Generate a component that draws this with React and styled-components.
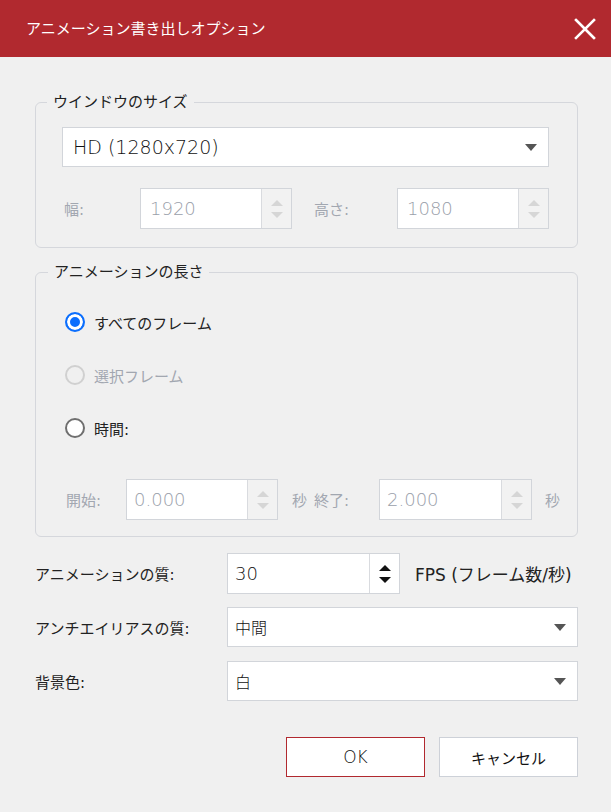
import React from 'react'
import styled, { createGlobalStyle } from 'styled-components'

const GlobalStyle = createGlobalStyle`
  html, body {
    margin: 0;
    background: #f0f0f0;
  }
  body {
    font-family: "DejaVu Sans", "Noto Sans CJK JP", sans-serif;
    color: #222;
  }
`

const Dialog = styled.div`
  width: 611px;
  height: 812px;
  background: #f0f0f0;
  display: flex;
  flex-direction: column;
`

const TitleBar = styled.div`
  height: 57px;
  flex: none;
  background: #b1292f;
  display: flex;
  align-items: center;
  justify-content: space-between;
  padding: 0 14px 0 26px;
  box-sizing: border-box;
`

const Title = styled.div`
  color: #fff;
  font-size: 15px;
  line-height: 20px;
`

const CloseButton = styled.div`
  width: 24px;
  height: 24px;
  display: flex;
  align-items: center;
  justify-content: center;
`

const Body = styled.div`
  padding: 35px 33px 0 35px;
  display: flex;
  flex-direction: column;
`

const Group = styled.fieldset`
  margin: 0 0 ${p => p.$gap || 0}px;
  border: 1px solid #d5d7dc;
  border-radius: 6px;
  padding: ${p => p.$pad};
  min-inline-size: 0;
  display: flex;
  flex-direction: column;
`

const Legend = styled.legend`
  padding: 0 6px;
  margin-left: ${p => p.$indent}px;
  font-size: 15px;
  line-height: 20px;
  color: #222;
`

const SelectBox = styled.div`
  height: 40px;
  flex: 1 1 auto;
  box-sizing: border-box;
  background: #fff;
  border: 1px solid #d2d5da;
  display: flex;
  align-items: center;
  justify-content: space-between;
  padding: 0 11px 0 ${p => p.$padLeft || 7}px;
  font-size: ${p => p.$size || 16}px;
  font-weight: 300;
  color: #111;
`

const Caret = styled.span`
  width: 0;
  height: 0;
  border-left: 6px solid transparent;
  border-right: 6px solid transparent;
  border-top: 7px solid #555;
`

const FieldRow = styled.div`
  display: flex;
  align-items: center;
  margin-top: ${p => p.$top || 0}px;
`

const FieldLabel = styled.span`
  width: ${p => p.$width}px;
  flex: none;
  margin-left: ${p => p.$left || 0}px;
  padding-left: 2px;
  box-sizing: border-box;
  font-size: 15px;
  color: ${p => (p.$disabled ? '#a2a7b0' : '#222')};
`

const SpinBox = styled.div`
  width: ${p => p.$width}px;
  height: 41px;
  box-sizing: border-box;
  border: 1px solid #d2d5da;
  display: flex;
  flex: none;
  background: #fff;
`

const SpinValue = styled.div`
  flex: 1;
  display: flex;
  align-items: center;
  padding-left: ${p => p.$padLeft || 7}px;
  font-size: 18px;
  font-weight: 300;
  color: ${p => (p.$disabled ? '#9aa0aa' : '#111')};
`

const Stepper = styled.div`
  width: 30px;
  border-left: 1px solid #d9dbdf;
  background: ${p => (p.$disabled ? '#f2f2f2' : '#fff')};
  display: flex;
  flex-direction: column;
  align-items: center;
  justify-content: space-between;
  padding: 11px 0 10px;
  box-sizing: border-box;
`

const Arrow = styled.span`
  width: 0;
  height: 0;
  border-left: 6px solid transparent;
  border-right: 6px solid transparent;
  ${p => (p.$up ? 'border-bottom' : 'border-top')}: 6px solid ${p => (p.$disabled ? '#d6d6d6' : '#111')};
`

const Unit = styled.span`
  margin-left: ${p => p.$left}px;
  font-size: ${p => p.$size || 15}px;
  color: ${p => (p.$disabled ? '#a2a7b0' : '#222')};
  white-space: nowrap;
`

const RadioList = styled.div`
  display: flex;
  flex-direction: column;
  gap: 33px;
`

const RadioRow = styled.label`
  display: flex;
  align-items: center;
  height: 20px;
  margin-left: 1px;
  font-size: 15px;
  color: ${p => (p.$disabled ? '#a2a7b0' : '#222')};
`

const RadioDot = styled.span`
  width: 20px;
  height: 20px;
  box-sizing: border-box;
  border-radius: 50%;
  margin-right: 9px;
  border: 2px solid ${p => (p.$checked ? '#0b6efd' : p.$disabled ? '#d0d0d0' : '#6f6f6f')};
  background: ${p => (p.$checked ? '#0b6efd' : p.$disabled ? 'transparent' : '#fff')};
  box-shadow: ${p => (p.$checked ? 'inset 0 0 0 3px #fff' : 'none')};
`

const OptionRows = styled.div`
  display: flex;
  flex-direction: column;
  gap: 14px;
  margin-top: 16px;
`

const OptionRow = styled.div`
  display: flex;
  align-items: center;
  height: 40px;
`

const OptionLabel = styled.span`
  width: 192px;
  flex: none;
  font-size: 15px;
  color: #222;
`

const Buttons = styled.div`
  display: flex;
  justify-content: flex-end;
  gap: 14px;
  margin-top: 36px;
`

const Button = styled.div`
  width: 139px;
  height: 40px;
  box-sizing: border-box;
  background: #fff;
  border: 1px solid ${p => (p.$primary ? '#b1292f' : '#cdd1d8')};
  display: flex;
  align-items: center;
  justify-content: center;
  font-size: ${p => (p.$primary ? 17 : 15)}px;
  font-weight: ${p => (p.$primary ? 300 : 400)};
  color: #111;
`

const Spin = ({ width, value, disabled, padLeft }) => (
  <SpinBox $width={width}>
    <SpinValue $disabled={disabled} $padLeft={padLeft}>{value}</SpinValue>
    <Stepper $disabled={disabled}>
      <Arrow $up $disabled={disabled} />
      <Arrow $disabled={disabled} />
    </Stepper>
  </SpinBox>
)

const Radio = ({ label, checked, disabled }) => (
  <RadioRow $disabled={disabled}>
    <RadioDot $checked={checked} $disabled={disabled} />
    {label}
  </RadioRow>
)

const App = () => {
  return (
    <Dialog>
      <GlobalStyle />
      <TitleBar>
        <Title>アニメーション書き出しオプション</Title>
        <CloseButton>
          <svg width="22" height="22" viewBox="0 0 22 22">
            <path d="M2 2 L20 20 M20 2 L2 20" stroke="#fff" strokeWidth="2.6" strokeLinecap="square" />
          </svg>
        </CloseButton>
      </TitleBar>
      <Body>
        <Group $pad="15px 28px 18px 26px" $gap={14}>
          <Legend $indent={-15}>ウインドウのサイズ</Legend>
          <SelectBox $padLeft={10} $size={19}>
            <span>HD (1280x720)</span>
            <Caret />
          </SelectBox>
          <FieldRow $top={21}>
            <FieldLabel $width={78} $disabled>幅:</FieldLabel>
            <Spin width={152} value="1920" disabled padLeft={9} />
            <FieldLabel $width={85} $left={20} $disabled>高さ:</FieldLabel>
            <Spin width={152} value="1080" disabled padLeft={9} />
          </FieldRow>
        </Group>

        <Group $pad="30px 28px 16px 28px">
          <Legend $indent={-16}>アニメーションの長さ</Legend>
          <RadioList>
            <Radio label="すべてのフレーム" checked />
            <Radio label="選択フレーム" disabled />
            <Radio label="時間:" />
          </RadioList>
          <FieldRow $top={41}>
            <FieldLabel $width={62} $disabled>開始:</FieldLabel>
            <Spin width={152} value="0.000" disabled />
            <Unit $left={14} $disabled>秒</Unit>
            <FieldLabel $width={67} $left={5} $disabled>終了:</FieldLabel>
            <Spin width={153} value="2.000" disabled />
            <Unit $left={13} $disabled>秒</Unit>
          </FieldRow>
        </Group>

        <OptionRows>
          <OptionRow>
            <OptionLabel>アニメーションの質:</OptionLabel>
            <Spin width={173} value="30" />
            <Unit $left={15} $size={17}>FPS (フレーム数/秒)</Unit>
          </OptionRow>
          <OptionRow>
            <OptionLabel>アンチエイリアスの質:</OptionLabel>
            <SelectBox>
              <span>中間</span>
              <Caret />
            </SelectBox>
          </OptionRow>
          <OptionRow>
            <OptionLabel>背景色:</OptionLabel>
            <SelectBox>
              <span>白</span>
              <Caret />
            </SelectBox>
          </OptionRow>
        </OptionRows>

        <Buttons>
          <Button $primary>OK</Button>
          <Button>キャンセル</Button>
        </Buttons>
      </Body>
    </Dialog>
  )
}

export default App
